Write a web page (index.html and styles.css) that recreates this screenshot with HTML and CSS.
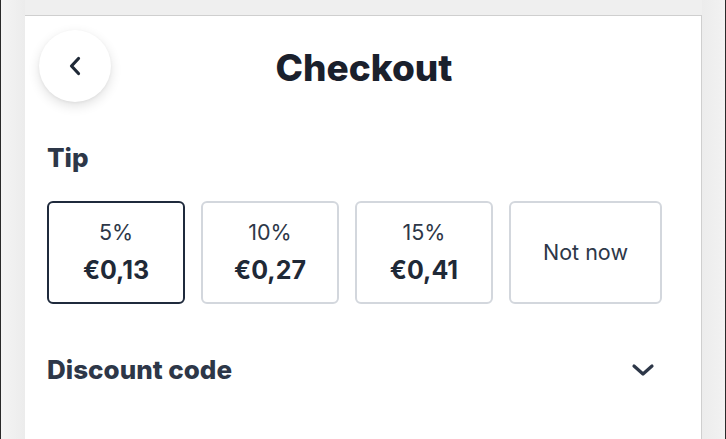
FILE: index.html
```html
<!DOCTYPE html>
<html>
<head>
<meta charset="utf-8">
<link rel="stylesheet" href="styles.css">
</head>
<body>
<div class="frame">
  <div class="edge-left"></div>
  <main class="panel">
    <header class="header">
      <button class="back" aria-label="Back">
        <svg width="16" height="22" viewBox="0 0 16 22"><path d="M11.5 3.5 L4.5 11 L11.5 18.5" fill="none" stroke="#1f2937" stroke-width="3.2" stroke-linecap="round" stroke-linejoin="round"/></svg>
      </button>
      <h1 class="title">Checkout</h1>
      <div></div>
    </header>
    <section class="tip">
      <h2 class="section-title">Tip</h2>
      <div class="tip-options">
        <div class="option selected"><span class="pct">5%</span><span class="amt">€0,13</span></div>
        <div class="option"><span class="pct">10%</span><span class="amt">€0,27</span></div>
        <div class="option"><span class="pct">15%</span><span class="amt">€0,41</span></div>
        <div class="option wide"><span class="pct">Not now</span></div>
      </div>
    </section>
    <section class="discount">
      <h2 class="section-title">Discount code</h2>
      <svg class="chev" width="24" height="16" viewBox="0 0 24 16"><path d="M3 4 L12 12 L21 4" fill="none" stroke="#2d3748" stroke-width="3.2" stroke-linecap="round" stroke-linejoin="round"/></svg>
    </section>
  </main>
  <div class="edge-right"></div>
</div>
</body>
</html>
```
FILE: styles.css
```css
* { box-sizing: border-box; }
html, body { margin: 0; padding: 0; }
body {
  width: 726px;
  height: 439px;
  overflow: hidden;
  background: #efefef;
  font-family: Inter, "Noto Sans", sans-serif;
  color: #2d3748;
}
.frame {
  display: flex;
  height: 439px;
}
.edge-left {
  width: 25px;
  flex: none;
  border-left: 1px solid #2a2a2a;
  background: linear-gradient(to right, #f4f4f4, #ececec);
}
.edge-right {
  flex: 1;
  border-right: 1px solid #2a2a2a;
  background: linear-gradient(to right, #ececec, #f2f2f2);
}
.panel {
  width: 677px;
  flex: none;
  margin-top: 15px;
  background: #fff;
  border-top: 1px solid #cfcfcf;
  border-right: 1px solid #cfcfcf;
  padding: 14px 38px 0 22px;
}
.header {
  display: grid;
  grid-template-columns: 1fr auto 1fr;
  align-items: center;
  margin-left: -8px;
  margin-right: -26px;
}
.back {
  width: 72px;
  height: 72px;
  border-radius: 50%;
  border: none;
  background: #fff;
  box-shadow: 0 4px 12px rgba(0,0,0,0.12), 0 1px 3px rgba(0,0,0,0.05);
  display: flex;
  align-items: center;
  justify-content: center;
  padding: 0;
}
.title {
  margin: 0;
  padding-top: 3px;
  font-size: 37px;
  font-weight: 800;
  color: #1a202c;
  letter-spacing: 0;
}
.section-title {
  margin: 0;
  font-size: 26px;
  font-weight: 800;
  color: #2d3748;
}
.tip { margin-top: 40px; }
.tip-options {
  display: flex;
  gap: 16px;
  margin-top: 28px;
}
.option {
  width: 138px;
  height: 103px;
  border: 2px solid #d3d7dd;
  border-radius: 6px;
  display: flex;
  flex-direction: column;
  align-items: center;
  justify-content: center;
  gap: 10px;
  padding-bottom: 2px;
}
.option.selected { border-color: #1f2a3c; }
.option.wide { width: 153px; }
.pct { font-size: 21.5px; font-weight: 400; color: #2d3748; }
.amt { font-size: 25px; font-weight: 700; color: #1f2937; }
.discount {
  margin-top: 50px;
  display: flex;
  align-items: center;
  justify-content: space-between;
}
.chev { margin-right: 8px; }
```
